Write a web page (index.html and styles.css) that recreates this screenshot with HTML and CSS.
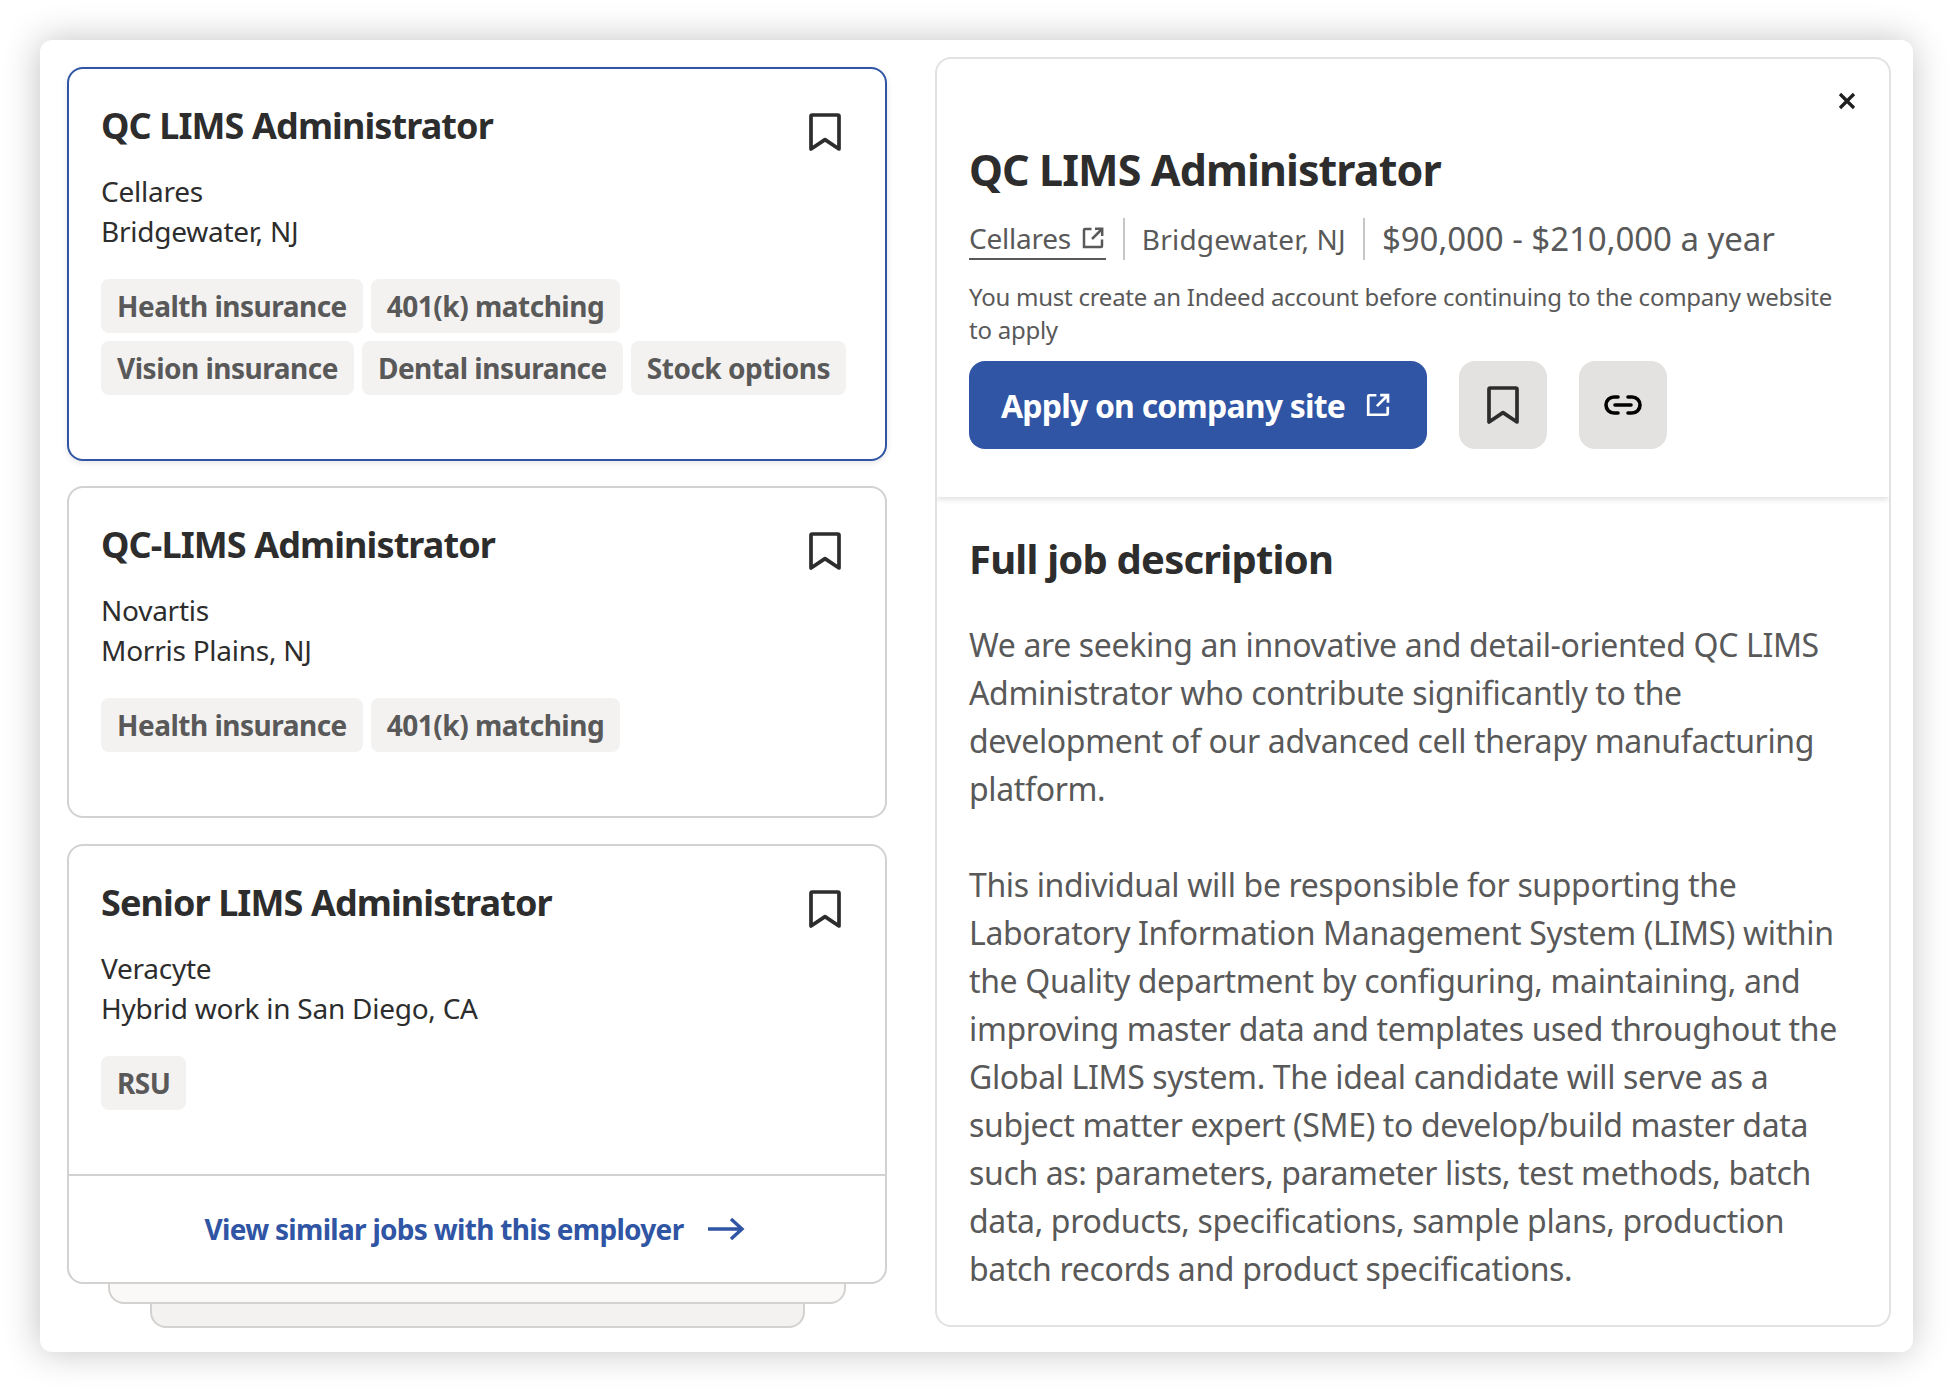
FILE: index.html
```html
<!DOCTYPE html>
<html lang="en">
<head>
<meta charset="utf-8">
<title>QC LIMS Administrator</title>
<link rel="stylesheet" href="styles.css">
</head>
<body>
<svg class="defs" width="0" height="0" aria-hidden="true">
  <symbol id="bm" viewBox="0 0 32 38"><path d="M2 3.2a1.2 1.2 0 0 1 1.2-1.2h25.6a1.2 1.2 0 0 1 1.2 1.2V36l-14-9.4L2 36z" fill="none" stroke="currentColor" stroke-width="3.7" stroke-linejoin="round"/></symbol>
  <symbol id="ext" viewBox="0 0 24 24"><path d="M10.5 3H4a1 1 0 0 0-1 1v17a0 0 0 0 0 0 0h17a1 1 0 0 0 1-1V13.5M11 13 21 3M14 2.8h7.2V10" fill="none" stroke="currentColor" stroke-width="2.5"/></symbol>
</svg>
<main class="panel">
  <section class="left">
    <article class="card selected">
      <header class="card-head"><h2>QC LIMS Administrator</h2><svg class="bm"><use href="#bm"/></svg></header>
      <p class="meta">Cellares<br>Bridgewater, NJ</p>
      <ul class="tags"><li>Health insurance</li><li>401(k) matching</li><li>Vision insurance</li><li>Dental insurance</li><li>Stock options</li></ul>
    </article>
    <article class="card second">
      <header class="card-head"><h2>QC-LIMS Administrator</h2><svg class="bm"><use href="#bm"/></svg></header>
      <p class="meta">Novartis<br>Morris Plains, NJ</p>
      <ul class="tags"><li>Health insurance</li><li>401(k) matching</li></ul>
    </article>
    <div class="stack">
      <article class="card third">
        <div class="third-body">
          <header class="card-head"><h2>Senior LIMS Administrator</h2><svg class="bm"><use href="#bm"/></svg></header>
          <p class="meta">Veracyte<br>Hybrid work in San Diego, CA</p>
          <ul class="tags"><li>RSU</li></ul>
        </div>
        <a class="similar">View similar jobs with this employer
          <svg class="arrow" viewBox="0 0 38 24"><path d="M1 12h34M24 2l11 10-11 10" fill="none" stroke="currentColor" stroke-width="3.4"/></svg>
        </a>
      </article>
      <div class="under under-a"></div>
      <div class="under under-b"></div>
    </div>
  </section>
  <section class="detail">
    <div class="detail-head">
      <svg class="close" viewBox="0 0 20 20"><path d="M3 3l14 14M17 3 3 17" stroke="#1f1f1f" stroke-width="3.2" fill="none"/></svg>
      <h1>QC LIMS Administrator</h1>
      <div class="facts">
        <a class="company">Cellares <svg class="ext-s"><use href="#ext"/></svg></a>
        <span class="fact">Bridgewater, NJ</span>
        <span class="fact salary">$90,000 - $210,000 a year</span>
      </div>
      <p class="notice">You must create an Indeed account before continuing to the company website to apply</p>
      <div class="actions">
        <a class="apply">Apply on company site <svg class="ext-l"><use href="#ext"/></svg></a>
        <button class="icon-btn" aria-label="Save"><svg class="bm"><use href="#bm"/></svg></button>
        <button class="icon-btn" aria-label="Copy link"><svg class="link" viewBox="0 0 40 22"><path d="M15 3H11a8 8 0 0 0 0 16h4M25 3h4a8 8 0 0 1 0 16h-4M12 11h16" fill="none" stroke="#000" stroke-width="3.6" stroke-linecap="round"/></svg></button>
      </div>
    </div>
    <div class="desc">
      <h2>Full job description</h2>
      <p>We are seeking an innovative and detail-oriented QC LIMS Administrator who contribute significantly to the development of our advanced cell therapy manufacturing platform.</p>
      <p>This individual will be responsible for supporting the Laboratory Information Management System (LIMS) within the Quality department by configuring, maintaining, and improving master data and templates used throughout the Global LIMS system. The ideal candidate will serve as a subject matter expert (SME) to develop/build master data such as: parameters, parameter lists, test methods, batch data, products, specifications, sample plans, production batch records and product specifications.</p>
    </div>
  </section>
</main>
</body>
</html>
```
FILE: styles.css
```css
* { box-sizing: border-box; }
html, body { margin: 0; background: #fff; }
body { padding: 40px; font-family: "Noto Sans", sans-serif; color: #2d2d2d; }
.defs { position: absolute; }
h1, h2, p, ul { margin: 0; padding: 0; }
.panel {
  width: 1873px; height: 1312px; background: #fff; border-radius: 12px;
  box-shadow: -1px 0 36px rgba(0,0,0,.24);
  display: grid; grid-template-columns: 820px 956px; column-gap: 48px;
  padding: 17px 22px 25px 27px;
}
.left { display: flex; flex-direction: column; padding-top: 10px; }
.card { border: 2px solid #d4d2d0; border-radius: 16px; background: #fff; padding: 0 32px; }
.selected { height: 394px; border-color: #2f55a4; box-shadow: 0 2px 6px rgba(0,0,0,.1); }
.second { height: 332px; margin-top: 25px; }
.stack { margin-top: 26px; position: relative; }
.third { padding: 0; height: 440px; position: relative; z-index: 2; display: flex; flex-direction: column; }
.third-body { padding: 0 32px; height: 330px; border-bottom: 2px solid #d4d2d0; }
.under { border: 2px solid #d4d2d0; border-top: 0; border-radius: 0 0 16px 16px; margin-top: -14px; }
.under-a { height: 34px; margin-left: 41px; margin-right: 41px; background: #faf9f8; position: relative; z-index: 1; }
.under-b { height: 38px; margin-left: 83px; margin-right: 82px; background: #f3f2f1; }
.card-head { display: flex; justify-content: space-between; padding-top: 35px; height: 102px; }
.card-head h2 { font-size: 36px; line-height: 44px; font-weight: 700; letter-spacing: -.9px; color: #2d2d2d; }
.bm { width: 32px; height: 38px; color: #2d2d2d; margin: 9px 12px 0 0; flex: none; }
.meta { font-size: 28px; line-height: 40px; letter-spacing: -.25px; color: #2d2d2d; }
.tags { list-style: none; display: flex; flex-wrap: wrap; gap: 8px; margin-top: 28px; }
.tags li { background: #f3f2f1; border-radius: 8px; height: 54px; line-height: 54px; padding: 0 16px; font-size: 28px; font-weight: 700; letter-spacing: -.5px; color: #595959; }
.similar { flex: 1; display: flex; align-items: center; justify-content: center; gap: 24px; color: #2f55a4; font-size: 28px; font-weight: 700; letter-spacing: -.7px; padding-right: 4px; }
.arrow { width: 38px; height: 24px; }
.detail { border: 2px solid #e4e2e0; border-radius: 16px; height: 1270px; overflow: hidden; }
.detail-head { height: 438px; padding: 0 32px; position: relative; box-shadow: 0 2px 6px rgba(0,0,0,.14); }
.close { position: absolute; right: 32px; top: 32px; width: 20px; height: 20px; }
.detail-head h1 { padding-top: 83px; font-size: 43px; line-height: 56px; font-weight: 700; letter-spacing: -.9px; color: #2d2d2d; }
.facts { display: flex; align-items: center; margin-top: 20px; font-size: 28px; height: 42px; letter-spacing: -.25px; color: #595959; }
.company { display: flex; align-items: center; gap: 10px; height: 42px; border-bottom: 2px solid #595959; padding-right: 1px; }
.fact { border-left: 2px solid #c8c6c4; margin-left: 17px; padding-left: 17px; line-height: 42px; letter-spacing: .2px; }
.salary { font-size: 33px; letter-spacing: -.05px; }
.ext-s { width: 24px; height: 24px; }
.ext-l { width: 26px; height: 26px; margin-left: 20px; }
.notice { margin-top: 21px; font-size: 24px; line-height: 32.5px; letter-spacing: -.25px; color: #595959; }
.actions { display: flex; margin-top: 15px; gap: 32px; }
.apply { width: 458px; height: 88px; border-radius: 16px; background: #2f55a4; color: #fff; display: flex; align-items: center; padding-left: 32px; font-size: 32px; font-weight: 700; letter-spacing: -.8px; }
.icon-btn { width: 88px; height: 88px; border: 0; border-radius: 16px; background: #e4e2e0; display: flex; align-items: center; justify-content: center; padding: 0; }
.icon-btn .bm { margin: 0; }
.link { width: 40px; height: 22px; }
.desc { padding: 0 32px; }
.desc h2 { padding-top: 36px; font-size: 40px; line-height: 52px; font-weight: 700; letter-spacing: -.8px; color: #2d2d2d; }
.desc p { font-size: 32px; line-height: 48px; letter-spacing: -.36px; color: #595959; margin-top: 36px; margin-bottom: 48px; }
.desc p + p { margin-top: 0; }
```
